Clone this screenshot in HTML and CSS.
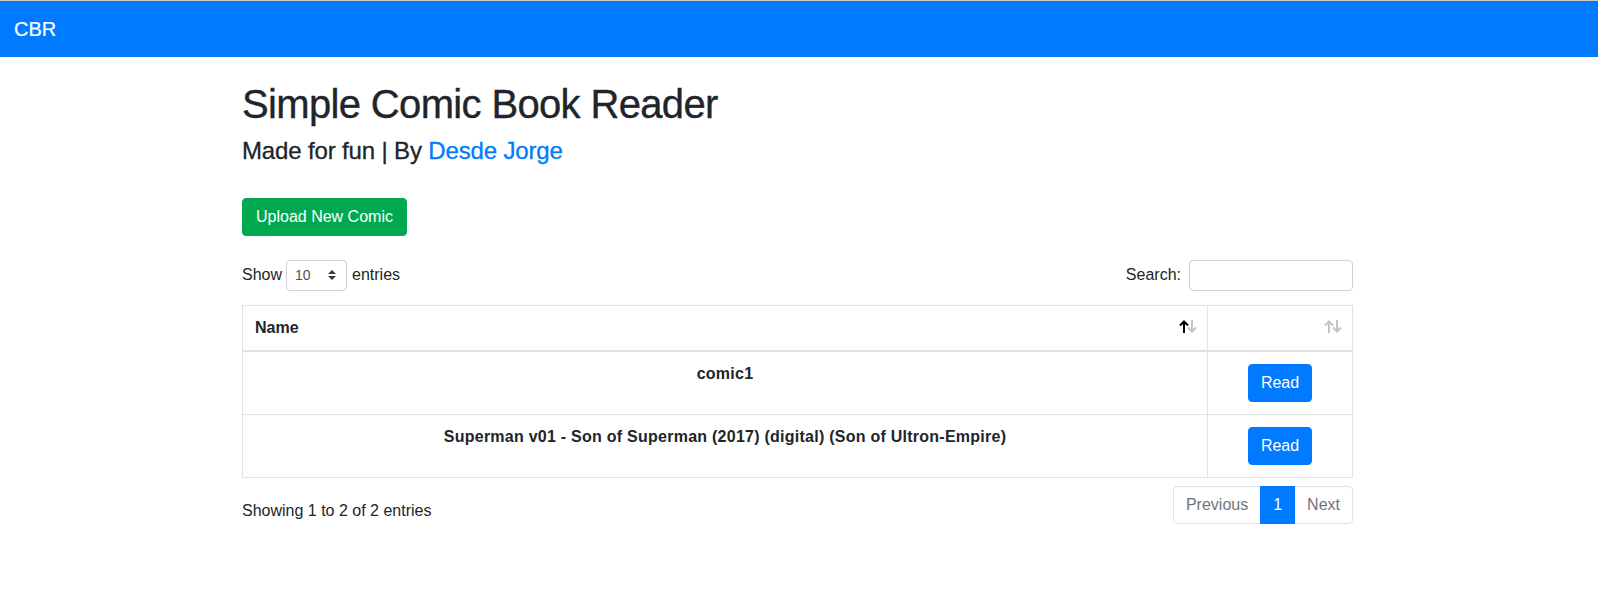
FILE: index.html
```html
<!DOCTYPE html>
<html lang="en">
<head>
<meta charset="utf-8">
<title>CBR</title>
<link rel="stylesheet" href="styles.css">
</head>
<body>
<nav class="navbar">
  <a class="brand" href="#">CBR</a>
</nav>
<main class="container">
  <h1 class="title">Simple Comic Book Reader</h1>
  <h4 class="subtitle">Made for fun | By <a class="link" href="#">Desde Jorge</a></h4>
  <button class="btn btn-success">Upload New Comic</button>

  <div class="dt-top">
    <label class="dt-length">Show <span class="select-sm">10<svg class="select-arrows" width="8" height="10" viewBox="0 0 8 10"><path d="M4 0 L8 4 H0 Z M4 10 L0 6 H8 Z" fill="#343a40"/></svg></span> entries</label>
    <label class="dt-filter">Search:<span class="input-sm"></span></label>
  </div>

  <table class="dt-table">
    <colgroup>
      <col>
      <col class="col-action">
    </colgroup>
    <thead>
      <tr>
        <th class="sorting">Name<svg class="sort-icon" width="18" height="13" viewBox="0 0 18 13"><g fill="none" stroke-width="2"><path d="M5 13 V1.5 M1 5.5 L5 1.5 L9 5.5" stroke="#000"/><path d="M13 0 V11.5 M9 7.5 L13 11.5 L17 7.5" stroke="#c4c4c4"/></g></svg></th>
        <th class="sorting"><svg class="sort-icon" width="18" height="13" viewBox="0 0 18 13"><g fill="none" stroke-width="2"><path d="M5 13 V1.5 M1 5.5 L5 1.5 L9 5.5" stroke="#c4c4c4"/><path d="M13 0 V11.5 M9 7.5 L13 11.5 L17 7.5" stroke="#c4c4c4"/></g></svg></th>
      </tr>
    </thead>
    <tbody>
      <tr>
        <td class="cell-name"><h6 class="comic-title">comic1</h6></td>
        <td class="cell-action"><button class="btn btn-primary">Read</button></td>
      </tr>
      <tr>
        <td class="cell-name"><h6 class="comic-title">Superman v01 - Son of Superman (2017) (digital) (Son of Ultron-Empire)</h6></td>
        <td class="cell-action"><button class="btn btn-primary">Read</button></td>
      </tr>
    </tbody>
  </table>

  <div class="dt-bottom">
    <div class="dt-info">Showing 1 to 2 of 2 entries</div>
    <ul class="pagination">
      <li class="page-item disabled"><span class="page-link">Previous</span></li>
      <li class="page-item active"><span class="page-link">1</span></li>
      <li class="page-item disabled"><span class="page-link">Next</span></li>
    </ul>
  </div>
</main>
</body>
</html>
```
FILE: styles.css
```css
* { box-sizing: border-box; }

html, body {
  margin: 0;
  padding: 0;
}

body {
  font-family: "Liberation Sans", Arial, sans-serif;
  font-size: 16px;
  line-height: 1.5;
  color: #212529;
  background: #fff;
}

.navbar {
  height: 57px;
  border-top: 1px solid #c8c8c8;
  background: #007bff;
  display: flex;
  align-items: center;
  padding: 0 14px;
}

.brand {
  color: #fff;
  text-decoration: none;
  font-size: 20px;
  line-height: 30px;
  -webkit-text-stroke: 0.2px #fff;
}

.container {
  max-width: 1140px;
  margin: 0 auto;
  padding: 23px 16px 0 13px;
}

.title {
  margin: 0 0 9px;
  font-size: 40px;
  line-height: 48px;
  font-weight: 400;
  letter-spacing: -0.65px;
  -webkit-text-stroke: 0.35px #212529;
}

.subtitle {
  margin: 0;
  font-size: 24px;
  line-height: 28.8px;
  font-weight: 400;
  letter-spacing: -0.15px;
  -webkit-text-stroke: 0.3px currentColor;
}

.link {
  color: #007bff;
  text-decoration: none;
}

.btn {
  display: inline-block;
  font-family: inherit;
  font-size: 16px;
  line-height: 24px;
  padding: 6px 12px;
  border: 1px solid transparent;
  border-radius: 4px;
  color: #fff;
  cursor: pointer;
}

.btn-success {
  margin-top: 32px;
  background: #00a94f;
  border-color: #00a94f;
  padding: 6px 13px;
}

.btn-primary {
  background: #007bff;
  border-color: #007bff;
}

.dt-top {
  margin-top: 24px;
  display: flex;
  justify-content: space-between;
  align-items: center;
  height: 31px;
}

.dt-length, .dt-filter {
  display: flex;
  align-items: center;
  white-space: nowrap;
}

.select-sm {
  display: inline-flex;
  align-items: center;
  justify-content: space-between;
  width: 61px;
  height: 31px;
  margin: 0 5px 0 4px;
  padding: 0 10px 0 8px;
  border: 1px solid #ced4da;
  border-radius: 4px;
  font-size: 14px;
  color: #495057;
}

.input-sm {
  display: inline-block;
  width: 164px;
  height: 31px;
  margin-left: 8px;
  border: 1px solid #ced4da;
  border-radius: 4px;
}

.dt-table {
  width: 100%;
  margin-top: 14px;
  border-collapse: collapse;
  table-layout: fixed;
  border: 1px solid #dee2e6;
}

.col-action { width: 145px; }

.dt-table th,
.dt-table td {
  border: 1px solid #dee2e6;
  padding: 12px;
  vertical-align: top;
}

.dt-table th {
  position: relative;
  text-align: left;
  font-weight: 700;
  line-height: 20px;
  padding-right: 30px;
  border-bottom-width: 2px;
}

.sort-icon {
  position: absolute;
  right: 10px;
  bottom: 17px;
  display: block;
}

.cell-name { text-align: center; }

.comic-title {
  margin: 0;
  font-size: 16px;
  line-height: 19.2px;
  font-weight: 700;
  letter-spacing: 0.25px;
}

.cell-action {
  text-align: center;
}

.dt-bottom {
  margin-top: 8px;
  display: flex;
  justify-content: space-between;
  align-items: flex-start;
}

.dt-info {
  padding-top: 13px;
  white-space: nowrap;
}

.pagination {
  display: flex;
  list-style: none;
  margin: 0;
  padding: 0;
}

.page-link {
  display: block;
  padding: 6px 12px;
  line-height: 24px;
  border: 1px solid #dee2e6;
  margin-left: -1px;
  color: #6c757d;
  background: #fff;
}

.page-item:first-child .page-link {
  margin-left: 0;
  border-radius: 4px 0 0 4px;
}

.page-item:last-child .page-link {
  border-radius: 0 4px 4px 0;
}

.page-item.active .page-link {
  background: #007bff;
  border-color: #007bff;
  color: #fff;
  position: relative;
}
```
